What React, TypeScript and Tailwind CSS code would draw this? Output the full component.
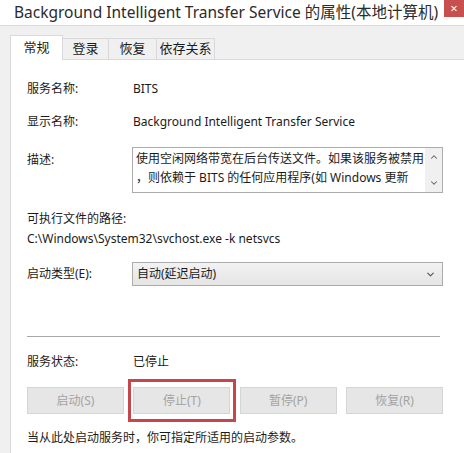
import { ChevronDown, ChevronUp } from 'lucide-react';

const font = 'font-["Segoe_UI","Noto_Sans","Noto_Sans_CJK_SC",sans-serif]';

function Row({ label, children }: { label: string; children: React.ReactNode }) {
  return (
    <div className="flex h-5 items-center">
      <div className="w-[106px] shrink-0">{label}</div>
      <div>{children}</div>
    </div>
  );
}

function Btn({ label, marked }: { label: string; marked?: boolean }) {
  return (
    <div className="relative">
      <div className="flex h-[27px] w-[97px] items-center justify-center border border-[#d5d5d5] bg-[#e6e6e6] text-[#a3a3a3]">
        {label}
      </div>
      {marked && (
        <span className="absolute -top-[8px] -bottom-[8px] -left-[5px] -right-[6px] border-[3px] border-[#c6474b]" />
      )}
    </div>
  );
}

export default function App() {
  return (
    <div className={`h-[453px] w-[464px] overflow-hidden bg-[#f0f0f0] text-[12px] text-[#1b1b1b] ${font}`}>
      {/* title bar */}
      <div className="flex h-[26px] items-start justify-between border-b border-[#dadada] bg-white">
        <div className="whitespace-nowrap pl-[14px] pt-[1px] text-[15.5px] leading-[22px] text-[#2b2b2b]">
          Background Intelligent Transfer Service 的属性(本地计算机)
        </div>
        <div className="flex h-[17px] w-[20px] shrink-0 items-center justify-center bg-[#c7504f] text-[13px] leading-none text-white">
          ×
        </div>
      </div>

      <div className="pl-[10px] pt-[9px]">
        {/* tabs */}
        <div className="flex items-end">
          <div className="relative z-10 -mb-px flex h-[25px] w-[53px] items-center justify-center border border-b-0 border-[#d9d9d9] bg-white text-[13px]">
            常规
          </div>
          <div className="flex h-[21px] w-[46px] items-center justify-center border border-l-0 border-b-0 border-[#d9d9d9] bg-[#f0f0f0] text-[13px]">
            登录
          </div>
          <div className="flex h-[21px] w-[48px] items-center justify-center border border-l-0 border-b-0 border-[#d9d9d9] bg-[#f0f0f0] text-[13px]">
            恢复
          </div>
          <div className="flex h-[21px] w-[58px] items-center justify-center border border-l-0 border-b-0 border-[#d9d9d9] bg-[#f0f0f0] text-[13px]">
            依存关系
          </div>
        </div>

        {/* panel */}
        <div className="h-[400px] border-l border-t border-[#d9d9d9] bg-white pl-[16px] pr-[20px]">
          <div className="pt-[19px]">
            <Row label="服务名称:">BITS</Row>
          </div>
          <div className="mt-[13px]">
            <Row label="显示名称:">Background Intelligent Transfer Service</Row>
          </div>

          <div className="mt-[15px] flex">
            <div className="w-[105px] shrink-0 pt-[3px] leading-5">描述:</div>
            <div className="flex h-[46px] w-[311px] border border-[#acacac] bg-white">
              <div className="flex-1 pl-[3px] pt-px leading-[19px]">
                使用空闲网络带宽在后台传送文件。如果该服务被禁用
                <br />
                ，则依赖于 BITS 的任何应用程序(如 Windows 更新
              </div>
              <div className="flex w-[17px] flex-col items-center justify-between bg-[#f0f0f0] py-[4px] text-[#606060]">
                <ChevronUp size={10} strokeWidth={2.5} />
                <ChevronDown size={10} strokeWidth={2.5} />
              </div>
            </div>
          </div>

          <div className="mt-[16px] leading-5">可执行文件的路径:</div>
          <div className="leading-5">C:\Windows\System32\svchost.exe -k netsvcs</div>

          <div className="mt-[13px] flex items-center">
            <div className="w-[105px] shrink-0">启动类型(E):</div>
            <div className="flex h-[24px] w-[311px] items-center justify-between border border-[#acacac] bg-gradient-to-b from-[#f2f2f2] to-[#e5e5e5] pl-[4px] pr-[6px]">
              <span>自动(延迟启动)</span>
              <ChevronDown size={11} strokeWidth={2.5} className="text-[#555]" />
            </div>
          </div>

          <div className="mt-[50px] h-px w-[413px] bg-[#a8a8a8]" />

          <div className="mt-[15px]">
            <Row label="服务状态:">已停止</Row>
          </div>

          <div className="mt-[15px] flex w-[416px] justify-between">
            <Btn label="启动(S)" />
            <Btn label="停止(T)" marked />
            <Btn label="暂停(P)" />
            <Btn label="恢复(R)" />
          </div>

          <div className="mt-[14px] leading-5">当从此处启动服务时，你可指定所适用的启动参数。</div>
        </div>
      </div>
    </div>
  );
}
